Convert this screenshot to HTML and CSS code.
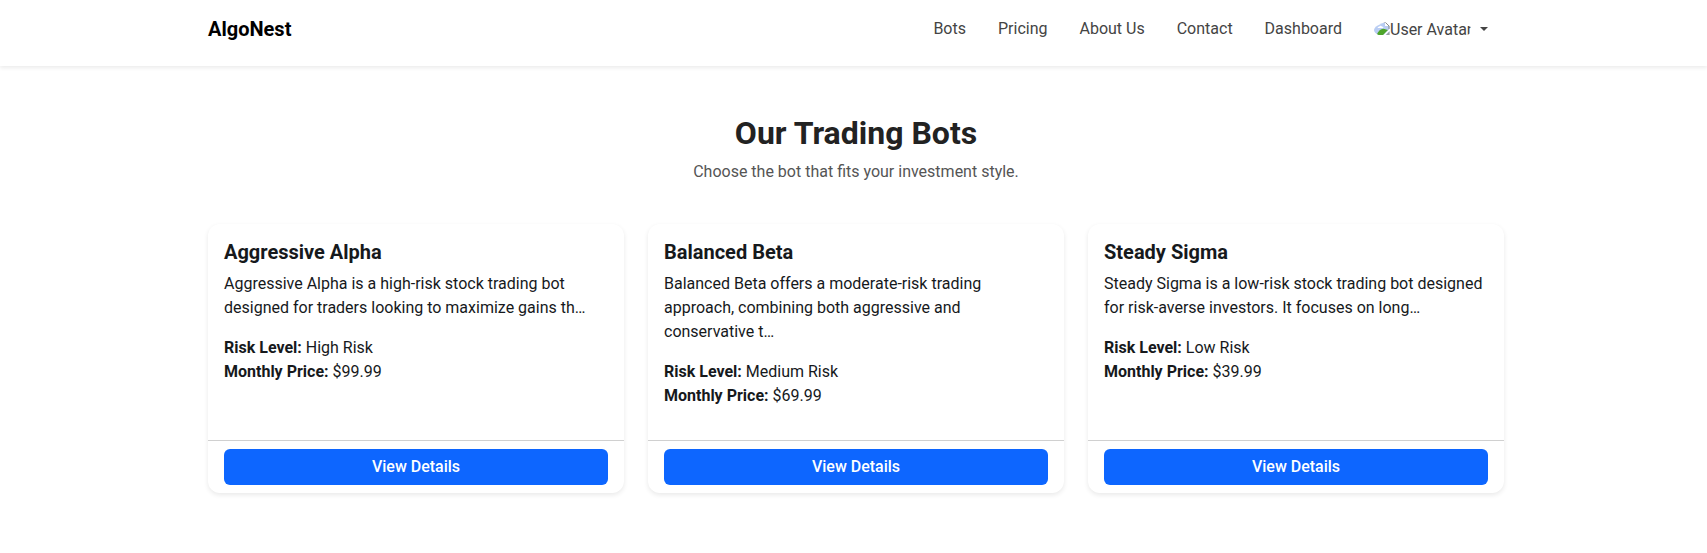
FILE: index.html
```html
<!DOCTYPE html>
<html lang="en">
<head>
<meta charset="utf-8">
<title>AlgoNest</title>
<link rel="stylesheet" href="styles.css">
</head>
<body>
<header class="navbar">
  <div class="container nav-inner">
    <a class="brand">AlgoNest</a>
    <nav class="nav-links">
      <a>Bots</a>
      <a>Pricing</a>
      <a>About Us</a>
      <a>Contact</a>
      <a>Dashboard</a>
      <a class="user">
        <span class="avatar"><svg class="avatar-icon" width="16" height="16" viewBox="0 0 16 16"><path d="M0 1h11l4.500 4v9H0z" fill="#b9cdf3"/><path d="M2.500 14Q6.500 5.500 12 8.500L14 9 9 14z" fill="#4ea52a"/><path d="M3.500 7q.3-1.500 1.800-1.500Q6.500 4 8 5.500q1.500 0 1.500 1.500z" fill="#fff"/><path d="M9 14.500L16 7.500v2L11 14.500z" fill="#fff"/><path d="M12 14L15.500 10.500V14z" fill="#9aa0a0"/><path d="M11 1v4h4.500" fill="#fff"/><path d="M8 1.500h3.500l3.500 3.500v3" fill="none" stroke="#8a8a8a"/></svg><span>User Avatar</span></span>
        <span class="caret"></span>
      </a>
    </nav>
  </div>
</header>
<main class="container">
  <section class="intro">
    <h1>Our Trading Bots</h1>
    <p>Choose the bot that fits your investment style.</p>
  </section>
  <section class="cards">
    <article class="card">
      <div class="card-body">
        <h2>Aggressive Alpha</h2>
        <p>Aggressive Alpha is a high-risk stock trading bot designed for traders looking to maximize gains th…</p>
        <p><strong>Risk Level:</strong> High Risk<br><strong>Monthly Price:</strong> $99.99</p>
      </div>
      <div class="card-footer"><a class="btn">View Details</a></div>
    </article>
    <article class="card">
      <div class="card-body">
        <h2>Balanced Beta</h2>
        <p>Balanced Beta offers a moderate-risk trading approach, combining both aggressive and conservative t…</p>
        <p><strong>Risk Level:</strong> Medium Risk<br><strong>Monthly Price:</strong> $69.99</p>
      </div>
      <div class="card-footer"><a class="btn">View Details</a></div>
    </article>
    <article class="card">
      <div class="card-body">
        <h2>Steady Sigma</h2>
        <p>Steady Sigma is a low-risk stock trading bot designed for risk-averse investors. It focuses on long…</p>
        <p><strong>Risk Level:</strong> Low Risk<br><strong>Monthly Price:</strong> $39.99</p>
      </div>
      <div class="card-footer"><a class="btn">View Details</a></div>
    </article>
  </section>
</main>
</body>
</html>
```

FILE: styles.css
```css
* { box-sizing: border-box; }
body {
  margin: 0;
  min-height: 100vh;
  padding-left: 5px;
  font: 16px/24px Roboto, sans-serif;
  color: #212529;
  background: #fff;
}
h1, h2, p { margin: 0; }
.container { width: 1296px; margin: 0 auto; }
.navbar {
  height: 66px;
  margin-left: -5px;
  padding-left: 5px;
  background: #fff;
  box-shadow: 0 2px 4px rgba(0, 0, 0, 0.08);
}
.nav-inner {
  display: flex;
  justify-content: space-between;
  align-items: center;
  height: 58px;
}
.brand { font-size: 20px; font-weight: 700; color: #000; }
.nav-links {
  display: flex;
  gap: 32px;
  padding-right: 16px;
  color: #444;
}
.user { display: flex; align-items: center; }
.avatar {
  display: flex;
  align-items: center;
  height: 24px;
  width: 98px;
  margin-top: 1px;
  border-radius: 50%;
  overflow: hidden;
  white-space: nowrap;
}
.avatar-icon { flex: none; margin-top: -2px; }
.caret {
  margin-left: 8px;
  border-top: 4px solid #444;
  border-left: 4px solid transparent;
  border-right: 4px solid transparent;
}
.intro { padding-top: 48px; text-align: center; }
.intro h1 {
  font-size: 32px;
  line-height: 38px;
  font-weight: 700;
  color: #222;
  margin-bottom: 8px;
}
.intro p { color: #555; }
.cards {
  display: grid;
  grid-template-columns: repeat(3, 1fr);
  gap: 24px;
  margin-top: 40px;
  padding-bottom: 48px;
}
.card {
  display: flex;
  flex-direction: column;
  background: #fff;
  border-radius: 12px;
  box-shadow: 0 2px 5px rgba(0, 0, 0, 0.09);
}
.card-body { flex: 1; padding: 16px 16px 0; color: #16191c; }
.card-body h2 { font-size: 20px; line-height: 24px; font-weight: 700; margin-bottom: 8px; }
.card-body p { margin-bottom: 16px; }
.card-body p:last-child { margin-bottom: 32px; }
.card-footer { padding: 8px 16px; border-top: 1px solid #d0d0d0; }
.btn {
  display: block;
  padding: 6px 12px;
  border-radius: 6px;
  background: #0d66ff;
  color: #fff;
  font-weight: 500;
  text-align: center;
}
```
